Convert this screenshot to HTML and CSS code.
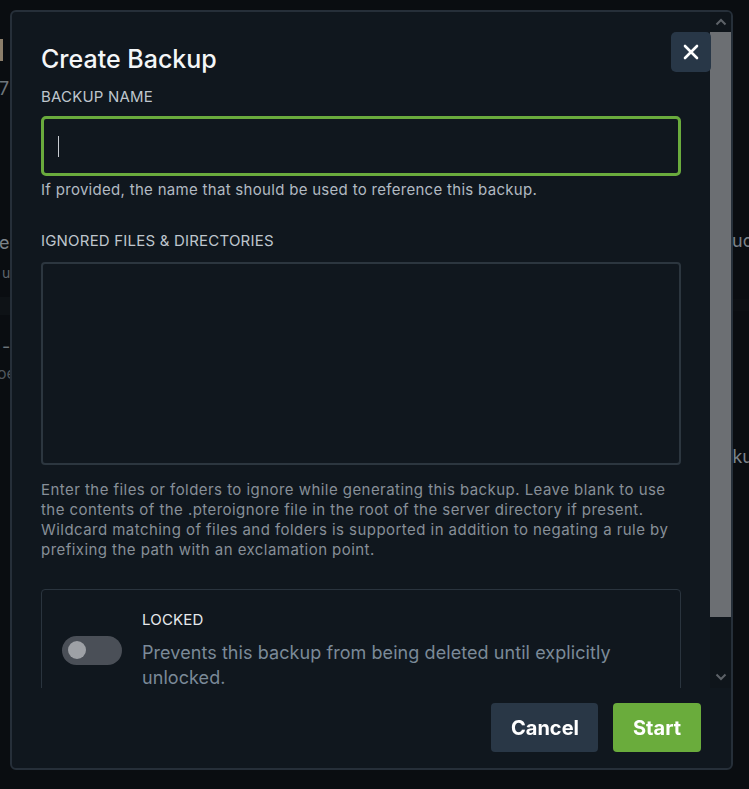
FILE: index.html
```html
<!DOCTYPE html>
<html lang="en">
<head>
<meta charset="utf-8">
<title>Create Backup</title>
<link rel="stylesheet" href="styles.css">
</head>
<body>
<div class="page">
  <div class="strip strip-left">
    <span class="ghost-bar"></span>
    <span class="ghost g-seven">7</span>
    <span class="ghost g-e">e</span>
    <span class="ghost g-u">u</span>
    <span class="band"></span>
    <span class="ghost g-dash">-</span>
    <span class="ghost g-oe">oe</span>
  </div>
  <div class="strip strip-right">
    <span class="ghost g-uc">uc</span>
    <span class="band band-r"></span>
    <span class="ghost g-ku">ku</span>
  </div>
</div>

<div class="modal" role="dialog" aria-labelledby="modal-title">
  <button class="close" type="button" aria-label="Close">
    <svg width="16" height="16" viewBox="0 0 16 16" aria-hidden="true">
      <path d="M2 2 L14 14 M14 2 L2 14" stroke="#ffffff" stroke-width="2.6" stroke-linecap="round" fill="none"/>
    </svg>
  </button>
  <div class="modal-body">
    <div class="content">
      <h2 class="title" id="modal-title">Create Backup</h2>

      <label class="label">BACKUP NAME</label>
      <div class="input focused"><span class="caret"></span></div>
      <p class="help">If provided, the name that should be used to reference this backup.</p>

      <label class="label label-gap">IGNORED FILES &amp; DIRECTORIES</label>
      <div class="textarea"></div>
      <p class="help help-dim">Enter the files or folders to ignore while generating this backup. Leave blank to use the contents of the .pteroignore file in the root of the server directory if present. Wildcard matching of files and folders is supported in addition to negating a rule by prefixing the path with an exclamation point.</p>

      <div class="lock-box">
        <span class="toggle"><span class="knob"></span></span>
        <div class="lock-text">
          <div class="lock-title">LOCKED</div>
          <div class="lock-desc">Prevents this backup from being deleted until explicitly unlocked.</div>
        </div>
      </div>
    </div>
    <div class="scrollbar">
      <div class="sb-btn">
        <svg width="12" height="8" viewBox="0 0 12 8" aria-hidden="true"><path d="M1.5 6.5 L6 2 L10.5 6.5" stroke="#5d6268" stroke-width="2" fill="none"/></svg>
      </div>
      <div class="sb-track"><div class="sb-thumb"></div></div>
      <div class="sb-btn">
        <svg width="12" height="8" viewBox="0 0 12 8" aria-hidden="true"><path d="M1.5 1.5 L6 6 L10.5 1.5" stroke="#5d6268" stroke-width="2" fill="none"/></svg>
      </div>
    </div>
  </div>
  <div class="footer">
    <button class="btn btn-cancel" type="button">Cancel</button>
    <button class="btn btn-start" type="button">Start</button>
  </div>
</div>
</body>
</html>
```

FILE: styles.css
```css
* { box-sizing: border-box; }

html, body {
  margin: 0;
  height: 100%;
  background: #0a0d11;
  font-family: Inter, "Noto Sans", sans-serif;
  overflow: hidden;
}

/* ghost page behind the overlay */
.page {
  display: flex;
  justify-content: space-between;
  height: 100%;
}
.strip {
  display: flex;
  flex-direction: column;
  overflow: hidden;
}
.strip-left { width: 10px; }
.strip-right { width: 16px; align-items: flex-end; }

.ghost {
  display: block;
  color: #7c838a;
  font-size: 18px;
  line-height: 20px;
  white-space: nowrap;
}
.ghost-bar {
  display: block;
  width: 3px;
  height: 22px;
  margin-top: 39px;
  background: #8c7e6a;
}
.g-seven { margin-top: 18px; margin-left: -1px; color: #6f767d; }
.g-e { margin-top: 134px; margin-left: -1px; }
.g-u { margin-top: 10px; margin-left: 2px; font-size: 14px; color: #5e656c; }
.band {
  display: block;
  height: 18px;
  margin-top: 14px;
  background: #0e1216;
}
.g-dash { margin-top: 22px; margin-left: 2px; color: #6d747b; }
.g-oe { margin-top: 6px; margin-left: -3px; color: #50575e; font-size: 16px; }

.g-uc { margin-top: 231px; margin-right: -4px; }
.band-r { width: 16px; margin-top: 48px; height: 12px; background: #0c0f13; }
.g-ku { margin-top: 136px; margin-right: -4px; }

/* modal */
.modal {
  position: fixed;
  left: 10px;
  top: 10px;
  width: 723px;
  height: 760px;
  background: #10171e;
  border: 2px solid #262f39;
  border-radius: 6px;
  display: flex;
  flex-direction: column;
  overflow: hidden;
}

.close {
  position: absolute;
  top: 20px;
  right: 20px;
  width: 40px;
  height: 40px;
  border: 0;
  border-radius: 5px;
  background: #283747;
  display: flex;
  align-items: center;
  justify-content: center;
  padding: 0;
  z-index: 2;
}

.modal-body {
  display: flex;
  height: 676px;
  flex: none;
}

.content {
  flex: 1;
  min-width: 0;
  overflow: hidden;
  padding: 31px 29px 0 29px;
}

.title {
  margin: 0;
  font-size: 25px;
  line-height: 32px;
  font-weight: 500;
  color: #f4f6f8;
}

.label {
  display: block;
  margin-top: 12px;
  font-size: 15px;
  line-height: 20px;
  color: #bfc6cd;
  letter-spacing: 0.2px;
}
.label-gap { margin-top: 31px; }

.input {
  margin-top: 9px;
  height: 60px;
  border: 3px solid #6aab3d;
  border-radius: 5px;
  background: #10171e;
  display: flex;
  align-items: center;
  padding-left: 14px;
}
.caret {
  display: block;
  width: 1px;
  height: 21px;
  background: #c8cdd2;
}

.help {
  margin: 4px 0 0;
  font-size: 15px;
  line-height: 20px;
  color: #b2bac2;
  letter-spacing: 0.3px;
}
.help-dim {
  margin-top: 15px;
  color: #878f98;
  letter-spacing: 0.45px;
}

.textarea {
  margin-top: 11px;
  height: 203px;
  border: 2px solid #2c363f;
  border-radius: 4px;
  background: #10171e;
}

.lock-box {
  margin-top: 29px;
  border: 1px solid #2a343e;
  border-radius: 4px;
  display: flex;
  align-items: center;
  gap: 20px;
  padding: 20px 20px 20px 20px;
}

.toggle {
  flex: none;
  width: 60px;
  height: 29px;
  border-radius: 15px;
  background: #4a4f57;
  display: flex;
  align-items: center;
  padding-left: 6px;
}
.knob {
  width: 18px;
  height: 18px;
  border-radius: 50%;
  background: #9ea1a6;
}

.lock-title {
  font-size: 15px;
  line-height: 20px;
  color: #e6e9ec;
  letter-spacing: 0.2px;
}
.lock-desc {
  margin-top: 10px;
  font-size: 18px;
  line-height: 25px;
  color: #7b8a98;
  letter-spacing: 0.07px;
}

.scrollbar {
  flex: none;
  width: 21px;
  display: flex;
  flex-direction: column;
  background: #0f151b;
}
.sb-btn {
  height: 20px;
  flex: none;
  display: flex;
  align-items: center;
  justify-content: center;
}
.sb-btn:last-child { height: 23px; }
.sb-track {
  flex: 1;
  display: flex;
  flex-direction: column;
}
.sb-thumb {
  height: 585px;
  background: #6c6f73;
}

.footer {
  flex: 1;
  display: flex;
  justify-content: flex-end;
  align-items: flex-start;
  gap: 15px;
  padding: 15px 30px 0 0;
}

.btn {
  height: 49px;
  border: 0;
  border-radius: 4px;
  font-family: Inter, "Noto Sans", sans-serif;
  font-size: 20px;
  font-weight: 700;
  color: #ffffff;
  padding: 0 20px;
}
.btn-cancel { width: 107px; background: #293746; }
.btn-start { width: 88px; background: #6aac3c; }
```
